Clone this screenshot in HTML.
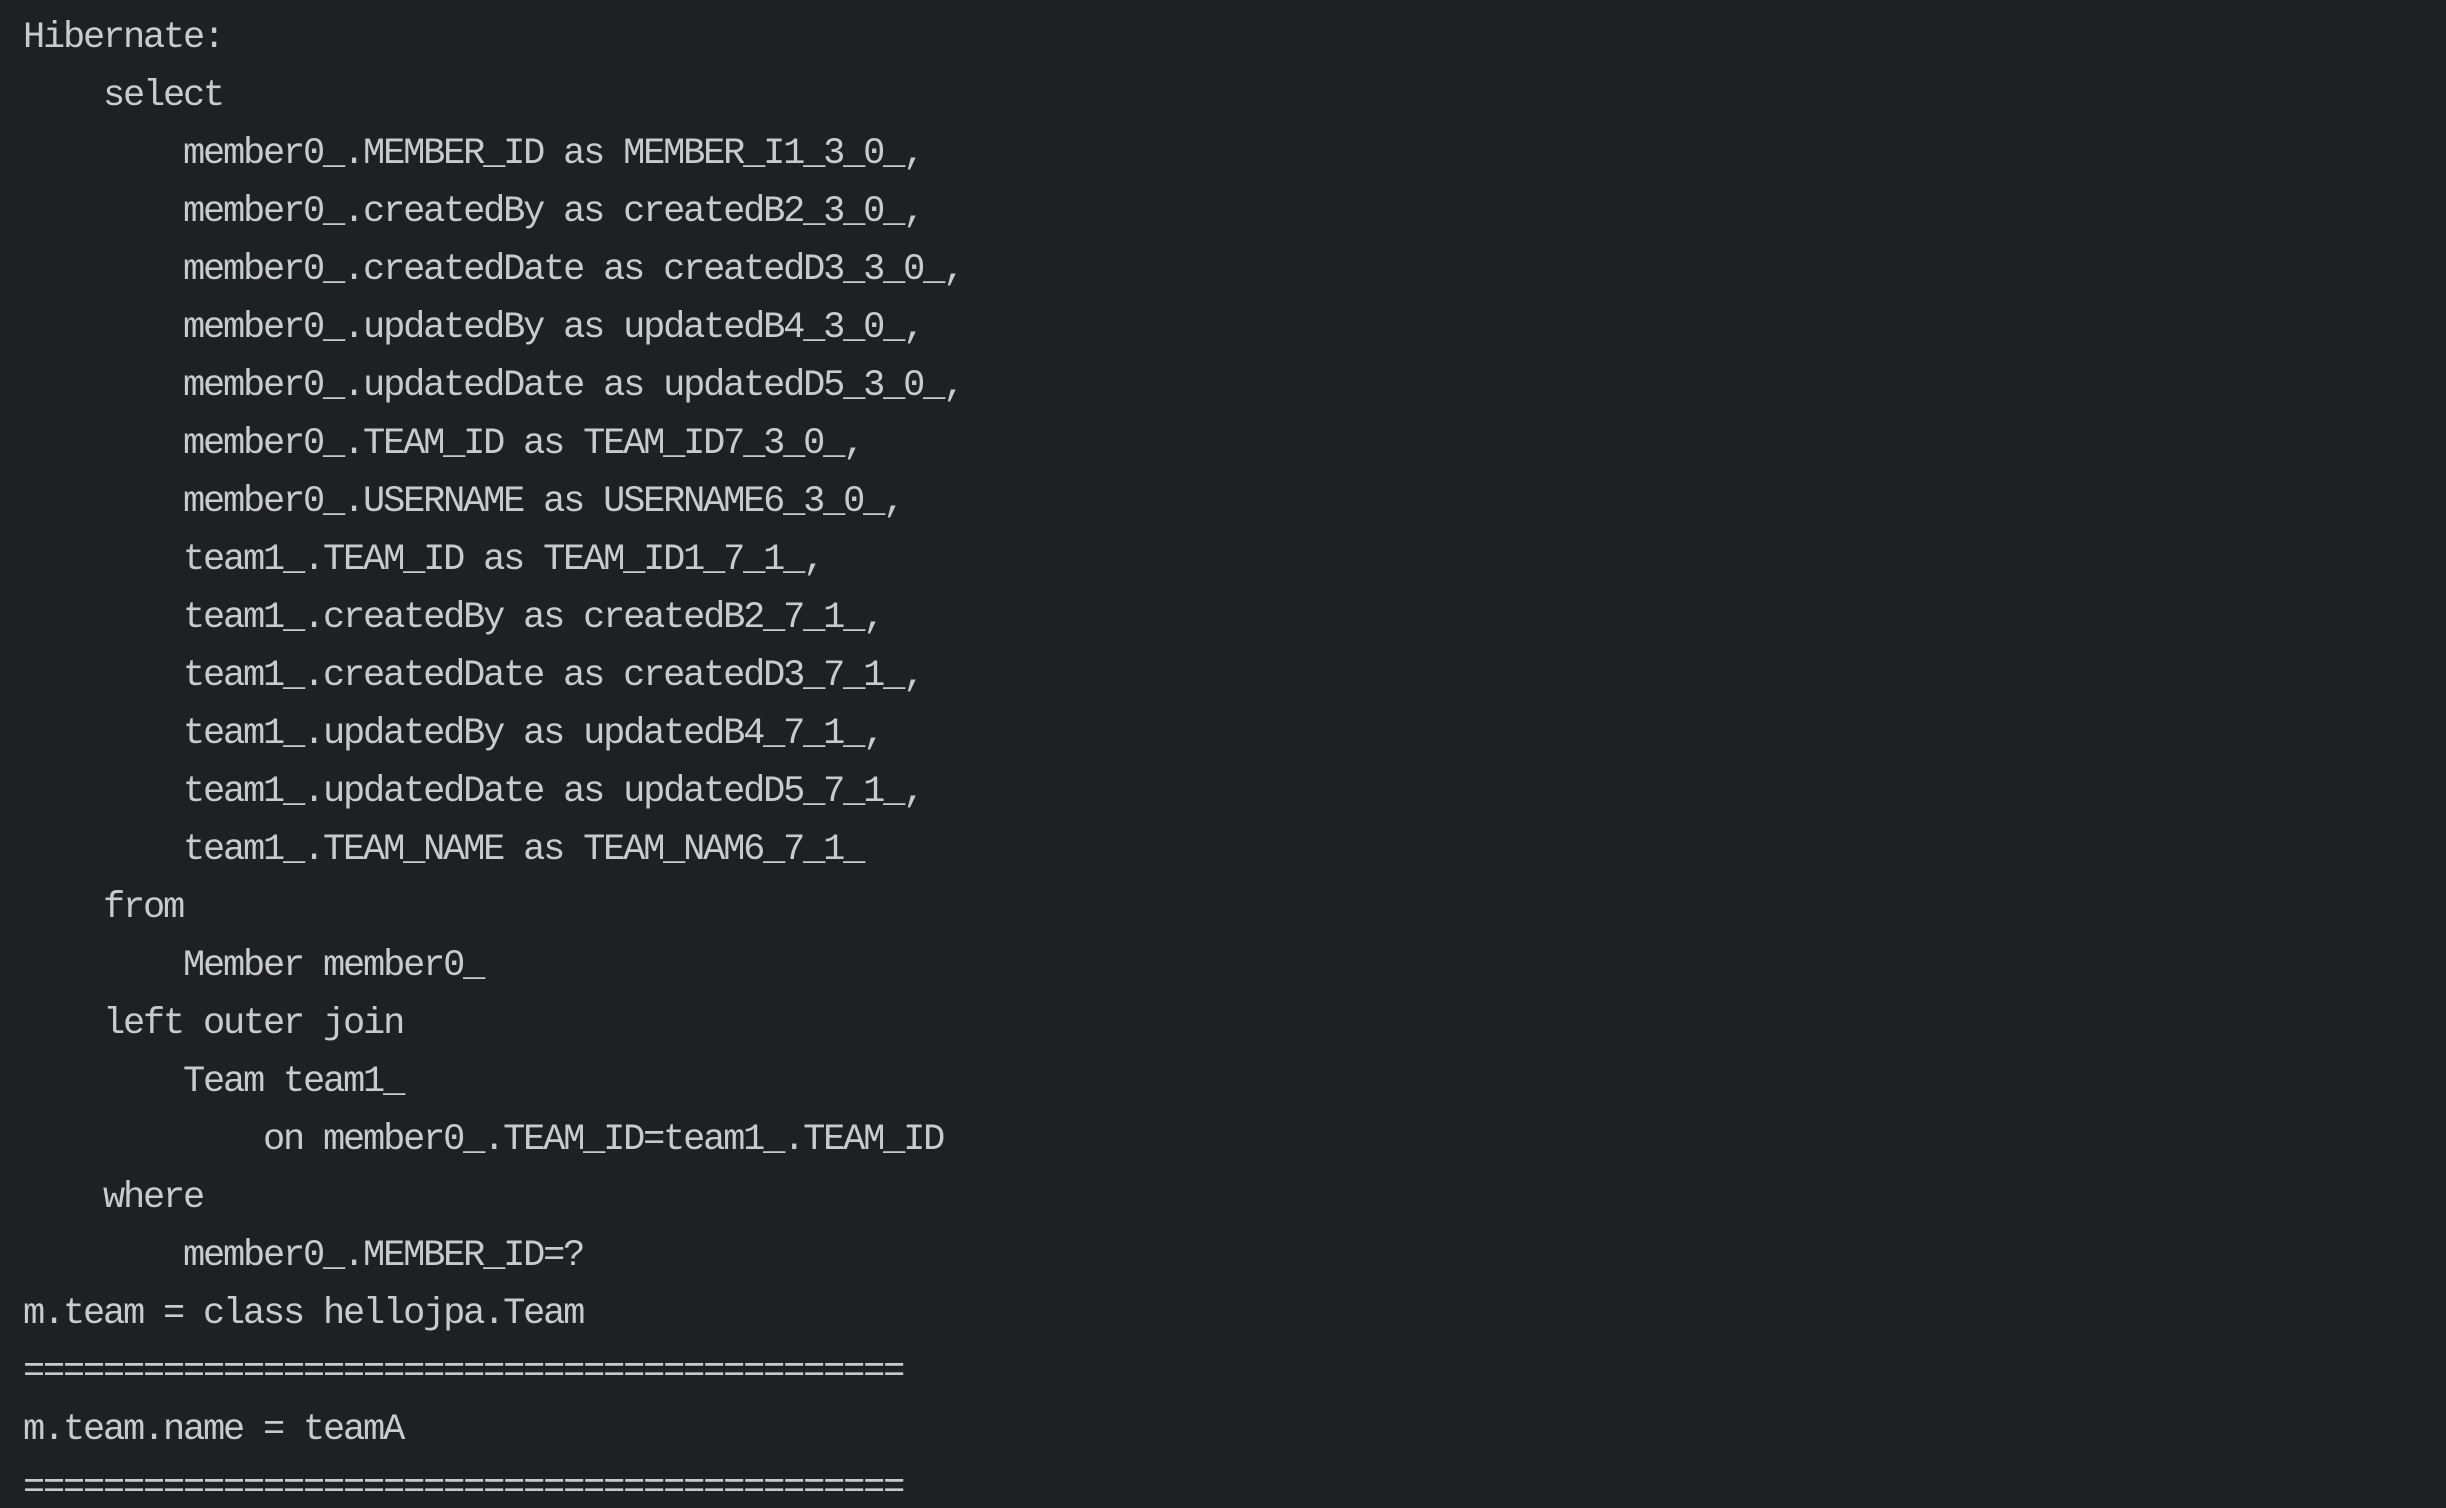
<!DOCTYPE html>
<html><head><meta charset="utf-8"><style>
html,body{margin:0;padding:0;background:#1f2023;width:2446px;height:1508px;overflow:hidden}
pre{margin:0;padding:9px 0 0 23px;font-family:"Liberation Mono",monospace;font-size:37px;letter-spacing:-2.2px;line-height:58px;color:#c9cacd;white-space:pre}
</style></head><body><pre>Hibernate:
    select
        member0_.MEMBER_ID as MEMBER_I1_3_0_,
        member0_.createdBy as createdB2_3_0_,
        member0_.createdDate as createdD3_3_0_,
        member0_.updatedBy as updatedB4_3_0_,
        member0_.updatedDate as updatedD5_3_0_,
        member0_.TEAM_ID as TEAM_ID7_3_0_,
        member0_.USERNAME as USERNAME6_3_0_,
        team1_.TEAM_ID as TEAM_ID1_7_1_,
        team1_.createdBy as createdB2_7_1_,
        team1_.createdDate as createdD3_7_1_,
        team1_.updatedBy as updatedB4_7_1_,
        team1_.updatedDate as updatedD5_7_1_,
        team1_.TEAM_NAME as TEAM_NAM6_7_1_
    from
        Member member0_
    left outer join
        Team team1_
            on member0_.TEAM_ID=team1_.TEAM_ID
    where
        member0_.MEMBER_ID=?
m.team = class hellojpa.Team
============================================
m.team.name = teamA
============================================</pre></body></html>
